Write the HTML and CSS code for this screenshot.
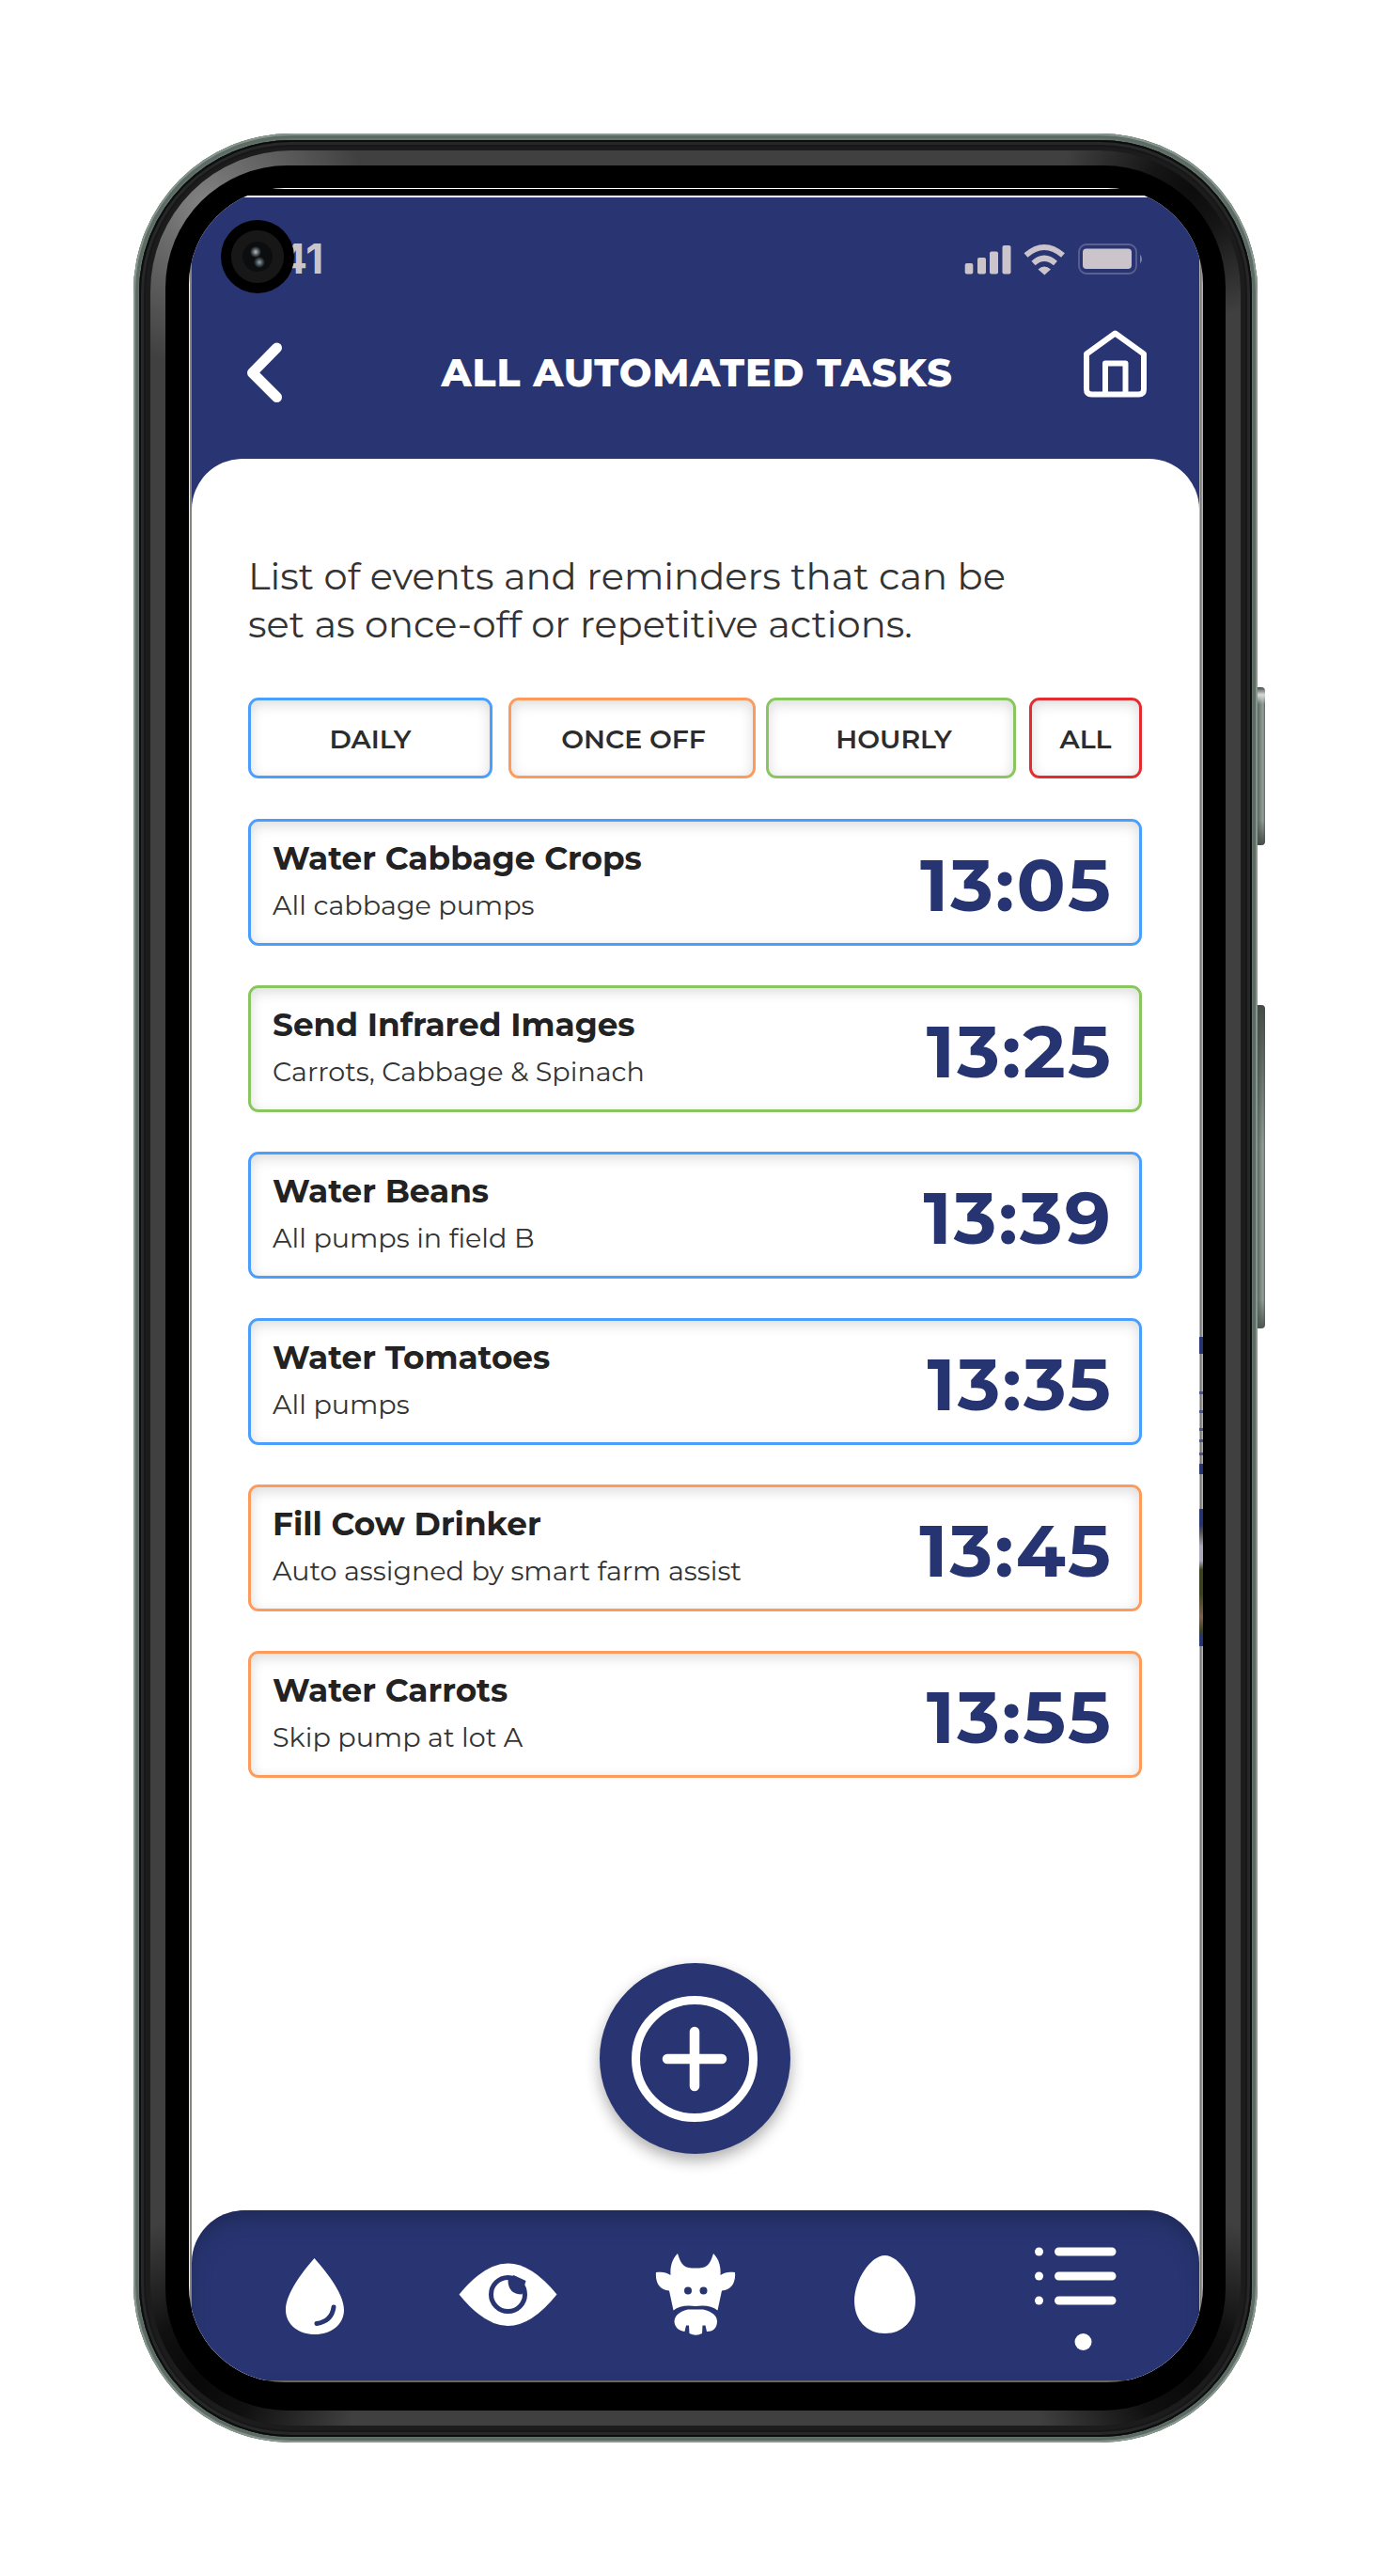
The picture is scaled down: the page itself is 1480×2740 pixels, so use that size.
FILE: index.html
```html
<!DOCTYPE html>
<html lang="en">
<head>
<meta charset="utf-8">
<title>All Automated Tasks</title>
<link rel="stylesheet" href="styles.css">
</head>
<body>
<div class="phone">
  <span class="side-button power"></span>
  <span class="side-button volume"></span>
  <div class="rim"><div class="bevel"><div class="bezel"><div class="opening">
    <div class="screen">
      <header class="header">
        <div class="status">
          <span class="clock">9:41</span>
          <svg class="status-icons" viewBox="1026 255 191 40" fill="#cbc5cb">
            <rect x="1026.7" y="280" width="8.6" height="11.5" rx="2"/>
            <rect x="1040" y="274" width="9" height="17.500" rx="2"/>
            <rect x="1053" y="267.500" width="9" height="24" rx="2"/>
            <rect x="1066.500" y="261" width="9" height="30.500" rx="2"/>
            <g fill="none" stroke="#cbc5cb" stroke-width="6">
              <path d="M1091.500 271.500Q1111 254.500 1131 271.500"/>
              <path d="M1099.500 280Q1111 269.500 1123 280"/>
            </g>
            <path d="M1104.500 286.500Q1111 280.500 1118 286.500L1111.300 292.500Z"/>
            <rect x="1148" y="260" width="61" height="31" rx="8" fill="none" stroke="#5c6190" stroke-width="1.800"/>
            <rect x="1152" y="264.500" width="52" height="21.500" rx="4"/>
            <path d="M1213 270.500Q1217 275.500 1213 280.500Z" fill="#7d80a2"/>
          </svg>
        </div>
        <div class="title-bar">
          <svg class="back" viewBox="262 362 40 68"><path d="M294.500 370 268.500 396.500 294.500 422.500" fill="none" stroke="#fff" stroke-width="11" stroke-linecap="round" stroke-linejoin="round"/></svg>
          <h1>ALL AUTOMATED TASKS</h1>
          <svg class="home" viewBox="1152 350 69 74" fill="none" stroke="#fff" stroke-width="6" stroke-linejoin="round"><path d="M1186.500 354.500 1156 376.500V414Q1156 419.500 1161.500 419.500H1211.500Q1217 419.500 1217 414V376.500ZM1176 419V386.500H1197.500V419"/></svg>
        </div>
      </header>
      <main class="panel">
        <p class="intro">List of events and reminders that can be<br>set as once-off or repetitive actions.</p>
        <div class="filters">
          <div class="filter daily">DAILY</div>
          <div class="filter once">ONCE OFF</div>
          <div class="filter hourly">HOURLY</div>
          <div class="filter all">ALL</div>
        </div>
        <div class="tasks">
          <div class="task daily"><div><h2>Water Cabbage Crops</h2><p>All cabbage pumps</p></div><time>13:05</time></div>
          <div class="task hourly"><div><h2>Send Infrared Images</h2><p>Carrots, Cabbage &amp; Spinach</p></div><time>13:25</time></div>
          <div class="task daily"><div><h2>Water Beans</h2><p>All pumps in field B</p></div><time>13:39</time></div>
          <div class="task daily"><div><h2>Water Tomatoes</h2><p>All pumps</p></div><time>13:35</time></div>
          <div class="task once"><div><h2>Fill Cow Drinker</h2><p>Auto assigned by smart farm assist</p></div><time>13:45</time></div>
          <div class="task once"><div><h2>Water Carrots</h2><p>Skip pump at lot A</p></div><time>13:55</time></div>
        </div>
        <div class="add">
          <svg viewBox="0 0 134 134" fill="none" stroke="#fff"><circle cx="67" cy="67" r="62.500" stroke-width="9"/><path d="M67 38V96M38 67H96" stroke-width="10.500" stroke-linecap="round"/></svg>
        </div>
        <nav class="nav">
          <svg viewBox="283 2385 104 120"><path d="M334.500 2402C344 2413 366 2438 366 2457C366 2473 352 2483 335 2483S304 2473 304 2457C304 2438 325 2413 334.500 2402Z"/><path class="cut" d="M355 2454Q353 2469 337 2471.500"/></svg>
          <svg viewBox="486.500 2385 104 120"><path d="M489 2440.500Q516 2407.500 541 2407.500T593 2440.500Q566 2474 541 2474T489 2440.500Z"/><circle class="cut" cx="541" cy="2440.500" r="18"/><path class="blue" d="M541 2425Q541 2440.500 556 2440.500L560 2426 547 2420Z"/></svg>
          <svg viewBox="688 2385 104 120"><path d="M721 2397C714 2404 713 2413 713.500 2420C708 2416 703 2416.500 698 2417C697 2428 702 2436 712 2436.500L716.500 2457.500C722 2453 730 2451.500 740 2453C750 2451.500 758 2453 763.500 2457.500L768 2436.500C778 2436 783 2428 782 2417C777 2416.500 772 2416 766.500 2420C767 2413 766 2404 759 2397C756 2406 754 2412 744 2412.500H736C726 2412 724 2406 721 2397Z"/><path d="M717.500 2469C718 2461 727 2457.500 732 2456.500H748C753 2457.500 763 2461 763 2469C763 2477 758 2480 752 2480L750.500 2473.500H747.500L747 2482Q740.500 2485.500 733.500 2482L733 2473.500H730L728.500 2480C722 2479 717.500 2475 717.500 2469Z"/><circle class="blue" cx="732" cy="2436.500" r="4"/><circle class="blue" cx="748.500" cy="2436.500" r="4"/></svg>
          <svg viewBox="891 2385 104 120"><path d="M941.500 2399C957 2399 974 2426 974 2447C974 2469 960 2482 941.500 2482S909 2469 909 2447C909 2426 926 2399 941.500 2399Z"/></svg>
          <svg viewBox="1093 2385 104 120"><g class="list"><path d="M1126.500 2395H1183M1126.500 2421H1183M1126.500 2447H1183"/></g><circle cx="1105.500" cy="2395" r="4.500"/><circle cx="1105.500" cy="2421" r="4.500"/><circle cx="1105.500" cy="2447" r="4.500"/><circle cx="1152.500" cy="2491" r="9"/></svg>
        </nav>
      </main>
    </div>
  </div></div></div></div>
  <span class="camera"></span>
</div>
</body>
</html>
```
FILE: styles.css
```css
* { box-sizing: border-box; }

body {
  margin: 0;
  padding: 142px;
  background: #fff;
  font-family: Montserrat, Inter, sans-serif;
}

h1, h2, p { margin: 0; }
svg { display: block; }

/* Phone frame, from the outside in */
.phone {
  position: relative;
  width: 1196px;
  height: 2456px;
  padding: 7px 6px 6px;
  border-radius: 168px;
  background: #66736c;
  box-shadow: inset 0 0 0 2px #87968e, inset 0 0 0 5px #5c6b63;
}

.rim {
  height: 100%;
  padding: 11px 12px 12px;
  border-radius: 162px;
  background: #1c1c1c;
  box-shadow: inset 0 0 0 2px #0c0e0e, inset 0 0 0 5px #262728, inset 0 0 0 7px #171717;
}

.bevel {
  height: 100%;
  padding: 16px;
  border-radius: 150px;
  background:
    radial-gradient(circle at 60px 60px, #858585 0, #6d6d6d 50px, transparent 170px) top left / 300px 300px no-repeat,
    radial-gradient(circle at 250px 40px, #0c0c0c 0, #151515 45px, transparent 140px) top right / 300px 300px no-repeat,
    radial-gradient(circle at 50px 250px, #080808 0, #101010 60px, transparent 170px) bottom left / 300px 300px no-repeat,
    radial-gradient(circle at 250px 250px, #080808 0, #101010 60px, transparent 170px) bottom right / 300px 300px no-repeat,
    #404040;
}

.bezel {
  height: 100%;
  padding: 24px 24px 30px 25px;
  border-radius: 130px;
  background: #000;
}

.opening {
  height: 100%;
  padding: 10px 4px 2px 3px;
  border-radius: 102px;
  overflow: hidden;
  background:
    linear-gradient(#fff 1px, #000 1px 8px, #fff 8px) top / 100% 10px no-repeat,
    linear-gradient(#666, #666) bottom / 100% 2px no-repeat,
    linear-gradient(90deg, #eee 1px, #85857d 1px) left / 3px 100% no-repeat,
    linear-gradient(transparent 1222px, #263471 1222px 1240px, transparent 1240px 1280px, #4b5480 1280px 1283px, transparent 1283px 1300px, #4b5480 1300px 1303px, transparent 1303px 1319px, #4b5480 1319px 1322px, transparent 1322px 1331px, #4b5480 1331px 1334px, transparent 1334px 1345px, #4b5480 1345px 1348px, transparent 1348px 1357px, #263471 1357px 1368px, transparent 1368px 1405px, #263471 1405px 1422px, #555 1430px, #aab 1445px 1460px, #3c421f 1470px 1495px, #7b6250 1520px, #3c421f 1535px, #263471 1540px 1551px, transparent 1551px) right / 4px 100% no-repeat,
    linear-gradient(90deg, #b5b5b5 1px, #777 1px 2px, #b0b0b0 3px) right / 4px 100% no-repeat,
    #fff;
}

.side-button {
  position: absolute;
  left: 1196px;
  width: 8px;
  border-radius: 0 4px 4px 0;
}

.power {
  top: 589px;
  height: 168px;
  background: linear-gradient(#444c47, #d5dbd8 8px, transparent 18px calc(100% - 26px), #444c47), linear-gradient(90deg, #5c6963, #93a199 6px, #59655f);
}

.volume {
  top: 927px;
  height: 344px;
  background: linear-gradient(#434b46, transparent 150px calc(100% - 30px), #4d5751), linear-gradient(90deg, #5c6963, #93a199 6px, #59655f);
}

.camera {
  position: absolute;
  left: 93px;
  top: 92px;
  width: 78px;
  height: 78px;
  border-radius: 50%;
  background:
    radial-gradient(circle at 37px 34px, #b9c2c6 0, #5b6165 3px, transparent 6px),
    radial-gradient(circle at 41px 45px, #93a5ad 0, #48545a 3px, transparent 6px),
    radial-gradient(circle, #0c0d0f 15.500px, #171717 16.500px 27.500px, #000 28.500px);
}

/* App screen */
.screen {
  display: flex;
  flex-direction: column;
  height: 100%;
  background: #283572;
  color: #fff;
}

.header { height: 278px; }

.status {
  display: flex;
  align-items: center;
  justify-content: space-between;
  height: 130px;
  padding: 0 59px 0 50px;
}

.clock {
  color: #cbc5cb;
  font-family: Inter, sans-serif;
  font-size: 44px;
  font-weight: 700;
}

.status-icons { width: 191px; height: 40px; }

.title-bar {
  display: grid;
  grid-template-columns: 69px 1fr 69px;
  align-items: center;
  height: 112px;
  padding: 0 55px 0 58px;
}

.title-bar h1 {
  font-size: 41px;
  font-weight: 800;
  letter-spacing: 0.900px;
  text-align: center;
  white-space: nowrap;
}

.back { width: 40px; height: 68px; }
.home { width: 69px; height: 74px; margin-bottom: 18px; }

.panel {
  flex: 1;
  display: flex;
  flex-direction: column;
  padding-top: 99px;
  border-radius: 54px 54px 0 0;
  background: #fff;
  color: #2c2c2c;
}

.intro {
  padding-left: 60px;
  color: #333;
  font-size: 40px;
  line-height: 51px;
}

.daily { --accent: #4a9ffc; }
.once { --accent: #fc9b5c; }
.hourly { --accent: #8ac65f; }
.all { --accent: #e22c30; }

.filters {
  display: flex;
  height: 86px;
  margin: 53px 61px 0 60px;
}

.filter, .task {
  border: 3px solid var(--accent);
  border-radius: 11px;
  background: #fff;
  box-shadow: inset 0 4px 14px rgba(0, 0, 0, 0.140);
}

.filter {
  display: flex;
  align-items: center;
  justify-content: center;
  padding-top: 2px;
  font-size: 28.300px;
  font-weight: 600;
}

.filter.daily { width: 260px; }
.filter.once { width: 263px; margin-left: 17px; padding-left: 3px; }
.filter.hourly { width: 266px; margin-left: 11px; padding-left: 6px; }
.filter.all { width: 120px; margin-left: 14px; }

.tasks {
  display: grid;
  gap: 43px;
  margin: 43px 61px 0 60px;
}

.task {
  display: flex;
  justify-content: space-between;
  height: 135px;
  margin-bottom: -1px;
  padding: 14px 28px 0 23px;
}

.task h2 {
  color: #222;
  font-size: 34.300px;
  font-weight: 700;
  line-height: 51px;
}

.task p {
  color: #333;
  font-size: 28.600px;
  line-height: 48px;
}

.task time {
  color: #263471;
  font-size: 77px;
  font-weight: 700;
  line-height: 106px;
  letter-spacing: 2.200px;
}

.add {
  display: grid;
  place-items: center;
  align-self: center;
  width: 203px;
  height: 203px;
  margin: 198px 2px 0 0;
  border-radius: 50%;
  background: #283572;
  box-shadow: 0 7px 16px rgba(0, 0, 0, 0.320);
}

.add svg { width: 134px; height: 134px; }

.nav {
  display: flex;
  justify-content: space-between;
  height: 181px;
  margin-top: auto;
  padding: 34px 79px 0;
  border-radius: 56px 56px 0 0;
  background: #283572;
  box-shadow: inset 0 14px 24px -8px rgba(24, 32, 66, 0.650);
}

.nav svg {
  width: 104px;
  height: 120px;
  overflow: visible;
  fill: #fff;
}

.nav .blue { fill: #283572; }
.nav .cut { fill: none; stroke: #283572; stroke-width: 5px; stroke-linecap: round; }
.nav .list { stroke: #fff; stroke-width: 9px; stroke-linecap: round; }
```
